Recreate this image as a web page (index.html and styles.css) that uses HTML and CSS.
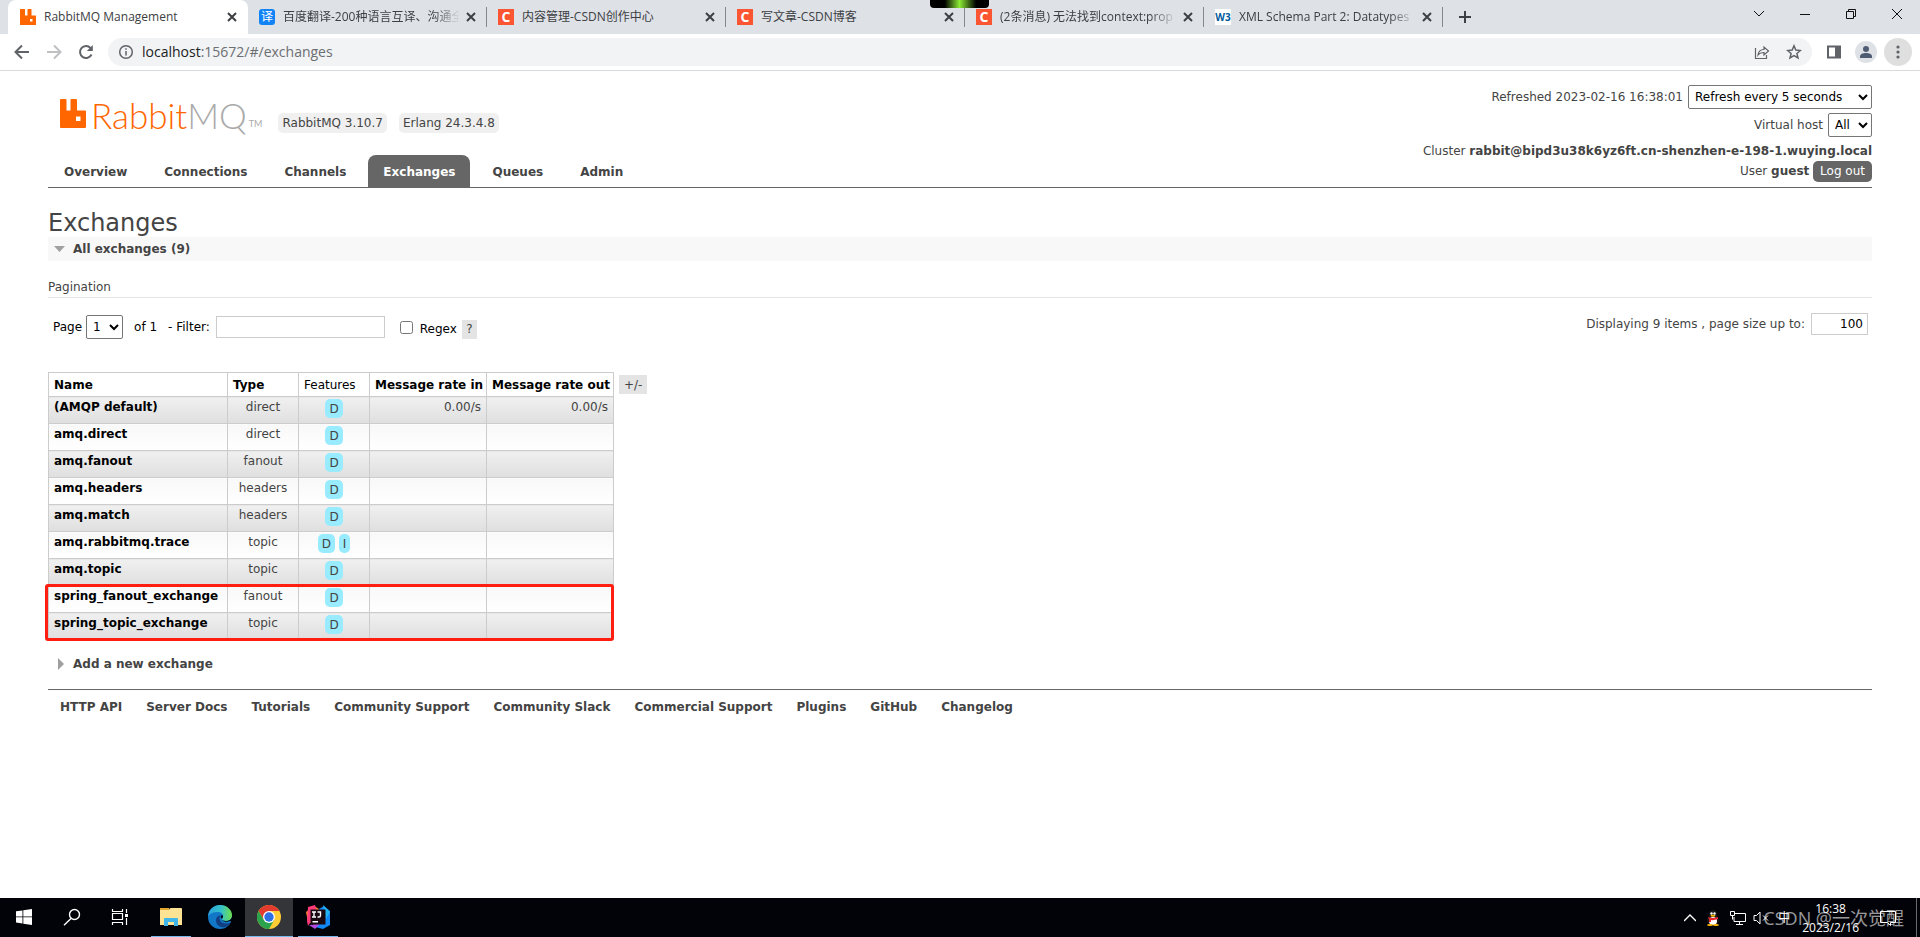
FILE: index.html
```html
<!DOCTYPE html>
<html lang="en">
<head>
<meta charset="utf-8">
<title>RabbitMQ Management</title>
<link rel="stylesheet" href="styles.css">
</head>
<body>
<header class="chrome">
  <div class="tabstrip">
    <div class="tab tab-active">
      <svg class="fav" viewBox="0 0 16 16"><path fill="#f60" d="M.5 0h4q.5 0 .5.5V6.500h2.500V.5q0-.5.5-.5h3q.5 0 .5.5V6.500h4q.5 0 .5.5v8.500q0 .5-.5.5H.5q-.5 0-.5-.5V.5Q0 0 .5 0zM10 10v2.500h2.500V10z"/></svg>
      <span class="tab-title">RabbitMQ Management</span>
      <button class="tab-x" aria-label="Close tab"><svg viewBox="0 0 10 10"><path d="M1 1l8 8M9 1L1 9"/></svg></button>
    </div>
    <div class="tab">
      <span class="fav fav-yi">译</span>
      <span class="tab-title fade">百度翻译-200种语言互译、沟通全</span>
      <button class="tab-x" aria-label="Close tab"><svg viewBox="0 0 10 10"><path d="M1 1l8 8M9 1L1 9"/></svg></button>
    </div>
    <div class="tab">
      <span class="fav fav-c">C</span>
      <span class="tab-title">内容管理-CSDN创作中心</span>
      <button class="tab-x" aria-label="Close tab"><svg viewBox="0 0 10 10"><path d="M1 1l8 8M9 1L1 9"/></svg></button>
    </div>
    <div class="tab">
      <span class="fav fav-c">C</span>
      <span class="tab-title">写文章-CSDN博客</span>
      <button class="tab-x" aria-label="Close tab"><svg viewBox="0 0 10 10"><path d="M1 1l8 8M9 1L1 9"/></svg></button>
    </div>
    <div class="tab">
      <span class="fav fav-c">C</span>
      <span class="tab-title fade">(2条消息) 无法找到context:prop</span>
      <button class="tab-x" aria-label="Close tab"><svg viewBox="0 0 10 10"><path d="M1 1l8 8M9 1L1 9"/></svg></button>
    </div>
    <div class="tab">
      <span class="fav fav-w3">W3</span>
      <span class="tab-title fade">XML Schema Part 2: Datatypes</span>
      <button class="tab-x" aria-label="Close tab"><svg viewBox="0 0 10 10"><path d="M1 1l8 8M9 1L1 9"/></svg></button>
    </div>
    <button class="newtab" aria-label="New tab"><svg viewBox="0 0 12 12"><path d="M6 0v12M0 6h12"/></svg></button>
    <div class="winctl">
      <button aria-label="Search tabs"><svg viewBox="0 0 12 12"><path d="M1 3l5 5 5-5"/></svg></button>
      <button aria-label="Minimize"><svg viewBox="0 0 12 12"><path d="M1 6.500h10"/></svg></button>
      <button aria-label="Restore"><svg viewBox="0 0 12 12"><path d="M1.500 3.500h7v7h-7zM3.500 3.500v-2h7v7h-2"/></svg></button>
      <button aria-label="Close"><svg viewBox="0 0 12 12"><path d="M1 1l10 10M11 1L1 11"/></svg></button>
    </div>
    <div class="meter"></div>
  </div>
  <div class="toolbar">
    <button class="tool" aria-label="Back"><svg viewBox="0 0 16 16"><path d="M15 8H2M8 1.500L1.500 8 8 14.500"/></svg></button>
    <button class="tool tool-off" aria-label="Forward"><svg viewBox="0 0 16 16"><path d="M1 8h13M8 1.500L14.500 8 8 14.500"/></svg></button>
    <button class="tool" aria-label="Reload"><svg viewBox="0 0 16 16"><path d="M13.500 10.500A6 6 0 1 1 12.500 4"/><path d="M14.800 1v6H8.800z" fill="#5f6368" stroke="none"/></svg></button>
    <div class="omnibox">
      <svg class="omni-icon" viewBox="0 0 16 16"><circle cx="8" cy="8" r="6.300"/><path d="M8 7v4.500M8 4.200v1.600"/></svg>
      <span class="url"><b>localhost</b>:15672/#/exchanges</span>
      <button aria-label="Share"><svg class="omni-icon" viewBox="0 0 16 16"><path d="M1.500 4v10.500h11V11M4 11c.5-4 3-5.500 6-5.500V3l4.500 4L10 11V8.500C7.500 8.500 5.500 9 4 11z" stroke-width="1.200"/></svg></button>
      <button aria-label="Bookmark"><svg class="omni-icon" viewBox="0 0 16 16"><path d="M8 1.800l1.800 4.300 4.600.4-3.500 3 1.100 4.500L8 11.600 4 14l1.100-4.500-3.500-3 4.600-.4z"/></svg></button>
    </div>
    <button class="tool" aria-label="Side panel"><svg viewBox="0 0 16 16"><path d="M2 2.500h12v11H2z"/><path d="M9 2h6v12H9z" fill="#5f6368" stroke="none"/></svg></button>
    <button class="avatar" aria-label="Profile"><svg viewBox="0 0 16 16"><circle cx="8" cy="5" r="3"/><path d="M2 14v-1.500C2 10 5 9 8 9s6 1 6 3.500V14z"/></svg></button>
    <button class="menu" aria-label="Menu"><svg viewBox="0 0 16 16"><circle cx="8" cy="3" r="1.600"/><circle cx="8" cy="8" r="1.600"/><circle cx="8" cy="13" r="1.600"/></svg></button>
  </div>
</header>

<main class="page">
  <div class="top">
    <div class="brand">
      <svg class="mark" viewBox="0 0 26 29"><path fill="#f60" d="M1 0h4.500q1 0 1 1v10.500h4V1q0-1 1-1H16q1 0 1 1v10.500h8q1 0 1 1V28q0 1-1 1H1q-1 0-1-1V1Q0 0 1 0zM16 17.500v4.500h4.500v-4.500z"/></svg>
      <span class="word"><span class="rabbit">Rabbit</span>MQ</span><span class="tm">TM</span>
      <span class="pill">RabbitMQ 3.10.7</span>
      <span class="pill">Erlang 24.3.4.8</span>
    </div>
    <div class="status">
      <div class="status-row"><label for="refresh">Refreshed 2023-02-16 16:38:01</label><select id="refresh" class="sel-refresh"><option>Refresh every 5 seconds</option></select></div>
      <div class="status-row"><label for="vhost">Virtual host</label><select id="vhost" class="sel-vhost"><option>All</option></select></div>
      <div class="status-text">Cluster <b>rabbit@bipd3u38k6yz6ft.cn-shenzhen-e-198-1.wuying.local</b></div>
      <div class="status-text">User <b>guest</b> <button class="logout">Log out</button></div>
    </div>
  </div>
  <nav class="nav">
    <a href="#/">Overview</a><a href="#/connections">Connections</a><a href="#/channels">Channels</a><a href="#/exchanges" class="selected">Exchanges</a><a href="#/queues">Queues</a><a href="#/users">Admin</a>
  </nav>

  <h1>Exchanges</h1>
  <h2 class="section section-open"><svg viewBox="0 0 12 12"><path d="M0 3h11L5.500 9z"/></svg>All exchanges (9)</h2>

  <h3>Pagination</h3>
  <div class="filters">
    <label for="page">Page</label>
    <select id="page" class="sel-page"><option>1</option></select>
    <span class="of">of 1</span>
    <label for="filter" class="filter-label">- Filter:</label>
    <input id="filter" class="filter" type="text">
    <input id="regex" class="check" type="checkbox">
    <div class="regex"><label for="regex">Regex</label><button class="help">?</button></div>
    <div class="paging"><label for="size">Displaying 9 items , page size up to:</label><input id="size" class="size" type="text" value="100"></div>
  </div>

  <div class="listing">
    <div class="table-wrap">
      <table>
        <thead><tr><th class="c-name">Name</th><th class="c-type">Type</th><th class="c-feat">Features</th><th class="c-in">Message rate in</th><th class="c-out">Message rate out</th></tr></thead>
        <tbody>
          <tr><td><a href="#">(AMQP default)</a></td><td>direct</td><td><abbr>D</abbr></td><td>0.00/s</td><td>0.00/s</td></tr>
          <tr><td><a href="#">amq.direct</a></td><td>direct</td><td><abbr>D</abbr></td><td></td><td></td></tr>
          <tr><td><a href="#">amq.fanout</a></td><td>fanout</td><td><abbr>D</abbr></td><td></td><td></td></tr>
          <tr><td><a href="#">amq.headers</a></td><td>headers</td><td><abbr>D</abbr></td><td></td><td></td></tr>
          <tr><td><a href="#">amq.match</a></td><td>headers</td><td><abbr>D</abbr></td><td></td><td></td></tr>
          <tr><td><a href="#">amq.rabbitmq.trace</a></td><td>topic</td><td><abbr>D</abbr> <abbr>I</abbr></td><td></td><td></td></tr>
          <tr><td><a href="#">amq.topic</a></td><td>topic</td><td><abbr>D</abbr></td><td></td><td></td></tr>
          <tr><td><a href="#">spring_fanout_exchange</a></td><td>fanout</td><td><abbr>D</abbr></td><td></td><td></td></tr>
          <tr><td><a href="#">spring_topic_exchange</a></td><td>topic</td><td><abbr>D</abbr></td><td></td><td></td></tr>
        </tbody>
      </table>
      <div class="highlight"></div>
    </div>
    <button class="columns">+/-</button>
  </div>

  <h2 class="section"><svg viewBox="0 0 12 12"><path d="M4 0l6 6-6 6z"/></svg>Add a new exchange</h2>

  <footer class="foot">
    <a href="#">HTTP API</a><a href="#">Server Docs</a><a href="#">Tutorials</a><a href="#">Community Support</a><a href="#">Community Slack</a><a href="#">Commercial Support</a><a href="#">Plugins</a><a href="#">GitHub</a><a href="#">Changelog</a>
  </footer>
</main>

<div class="taskbar">
  <button class="task" aria-label="Start"><svg width="16" height="16" viewBox="0 0 16 16"><path fill="#fff" d="M0 2.300L6.500 1.400v6.100H0zM7.300 1.300L16 0v7.500H7.300zM0 8.300h6.500v6.200L0 13.600zM7.300 8.300H16V16l-8.700-1.200z"/></svg></button>
  <button class="task" aria-label="Search"><svg width="18" height="18" viewBox="0 0 18 18" fill="none" stroke="#fff" stroke-width="1.400"><circle cx="11.500" cy="6.500" r="5"/><path d="M8 10.500L1 17.300"/></svg></button>
  <button class="task" aria-label="Task view"><svg width="18" height="18" viewBox="0 0 18 18" fill="none" stroke="#fff" stroke-width="1.200"><path d="M1.500 1v2.500h10V1M1.500 5.500h10v6h-10zM1.500 17v-2.500h10V17M15.500 1v4M15.500 10v7"/><path d="M14 6h3v3h-3z" fill="#fff" stroke="none"/></svg></button>
  <button class="task task-wide open" aria-label="File Explorer"><svg width="24" height="24" viewBox="0 0 24 24"><path fill="#e3a832" d="M1 3h9l1 2H1z"/><path fill="#ffe394" d="M1 5h9l1.500-2H22q1 0 1 1v16H1z"/><path fill="#41b5e8" d="M5 21v-7q0-1 1-1h12q1 0 1 1v7h-4v-4H9v4z"/></svg></button>
  <button class="task" aria-label="Edge"><svg width="24" height="24" viewBox="0 0 24 24"><defs><linearGradient id="e1" x1="0" x2="1"><stop stop-color="#2aa3e0"/><stop offset=".55" stop-color="#35c1c8"/><stop offset="1" stop-color="#6fe04a"/></linearGradient></defs><circle cx="12" cy="12" r="12" fill="#1178c8"/><path fill="url(#e1)" d="M0 11C1 4 6 0 12 0c7 0 12 5 12 10 0 4-3 6-6 6-3 0-4-1-4-2 0-.8 1-1.200 1-3 0-2.500-2.500-4-5.500-4C5 7 1.500 9 0 11z"/><path fill="#123f82" d="M8 15c0 5 4 8 9 7 3-.8 5-3 5.500-4.500-3 1.500-8 1.500-10-1.500-1.500-2-1-4 0-5.500-2.500 0-4.500 2-4.500 4.500z"/><path fill="#020308" d="M14 14c0 2.500 3.500 3.500 8.500 2l1.500 2V12c-1 3-3.500 4-6 4-3 0-4-1-4-2z"/><path fill="#020308" d="M13 10.500q2-1 2 .8 0 1-1 2.500-2-1-1-3.300z"/></svg></button>
  <button class="task open current" aria-label="Chrome"><svg width="24" height="24" viewBox="0 0 24 24"><circle cx="12" cy="12" r="12" fill="#fc3"/><path fill="#e33b2e" d="M1.600 6A12 12 0 0 1 22.400 6H12L6.800 15z"/><path fill="#2ba24c" d="M1.600 6A12 12 0 0 0 12 24l5.200-9H6.800z"/><circle cx="12" cy="12" r="6" fill="#fff"/><circle cx="12" cy="12" r="4.700" fill="#2f6fe4"/></svg></button>
  <button class="task task-wide open" aria-label="IntelliJ IDEA"><svg width="24" height="24" viewBox="0 0 24 24"><path fill="#fd8b2c" d="M0 7l8-6 5 3-4 16-7-3z"/><path fill="#fc3a78" d="M2 2l7-2 2 7-9 14-1-5z"/><path fill="#1387f4" d="M13 4l5-3 6 5v14l-7 4-8-2z"/><path fill="#22b5f0" d="M17 0l7 7-4 7z"/><path fill="#b64be0" d="M3 20l6 4 5-5z"/><path fill="#190a12" d="M4.500 4.500h15v15h-15z"/><path d="M6 7h4M8 7v5M6 12h4M11.500 7h3v3.500q0 1.500-1.500 1.500h-1.500" fill="none" stroke="#fff" stroke-width="1.400"/><path fill="#fff" d="M6.500 16H12v1.500H6.500z"/></svg></button>
  <div class="tray">
    <svg class="i-up" viewBox="0 0 12 12" fill="none" stroke="#fff" stroke-width="1.400"><path d="M0 9l6-6 6 6"/></svg>
    <svg class="i-qq" viewBox="0 0 16 16"><ellipse cx="8" cy="10" rx="6" ry="5" fill="#181818"/><ellipse cx="8" cy="4.500" rx="4" ry="4.500" fill="#181818"/><ellipse cx="8" cy="11" rx="4" ry="4" fill="#fff"/><circle cx="6.500" cy="3.500" r="1.200" fill="#fff"/><circle cx="9.500" cy="3.500" r="1.200" fill="#fff"/><ellipse cx="8" cy="5.700" rx="2.500" ry="1" fill="#fb0"/><path fill="#e8262c" d="M3 7q5 2 10 0v2q-4 1.500-7 1v2H4V9.500z"/><ellipse cx="5" cy="15" rx="3" ry="1" fill="#fb0"/><ellipse cx="11" cy="15" rx="3" ry="1" fill="#fb0"/></svg>
    <svg class="i-net" viewBox="0 0 16 16" fill="none" stroke="#fff"><path d="M5 3.500h10.500v8H4V7M9.500 11.500v3M6 14.500h7M.5 1.500h4v4h-4zM2.500 5.500v4"/></svg>
    <svg class="i-snd" viewBox="0 0 16 16" fill="none" stroke="#fff"><path d="M1 5.500h2.500L7 2v12l-3.500-3.500H1zM10 5.500l5 5M15 5.500l-5 5"/></svg>
    <span class="ime">中</span>
    <div class="clock"><span>16:38</span><span>2023/2/16</span></div>
    <svg class="i-note" viewBox="0 0 16 16" fill="none" stroke="#fff"><path d="M.5 1.500h15v11h-5v3l-3-3h-7z"/></svg>
    <span class="desk"></span>
  </div>
  <span class="watermark">CSDN @一次觉醒</span>
</div>
</body>
</html>
```

FILE: styles.css
```css
* { box-sizing: border-box; }
body {
  margin: 0;
  min-height: 100vh;
  display: flex;
  flex-direction: column;
  background: #fff;
  color: #444;
  font: 12px/16px "DejaVu Sans", Verdana, sans-serif;
}
button { border: 0; background: none; padding: 0; font: inherit; color: inherit; }
a { color: #444; text-decoration: none; font-weight: bold; }
svg { display: block; flex: none; }

/* Browser window */
.chrome { font-family: "Open Sans", "Noto Sans CJK SC", sans-serif; }
.tabstrip {
  position: relative;
  display: flex;
  align-items: center;
  height: 34px;
  padding-left: 8px;
  background: #dee1e6;
}
.tab {
  display: flex;
  align-items: center;
  width: 239px;
  height: 20px;
  padding: 0 8px 0 11px;
  border-right: 1px solid #85888d;
}
.tab-active {
  width: 240px;
  height: 34px;
  padding: 0 9px 0 12px;
  border: 0;
  border-radius: 8px 8px 0 0;
  background: #fff;
}
.fav { width: 16px; height: 16px; flex: none; line-height: 16px; text-align: center; }
.fav-yi { border-radius: 3px; background: #1283f5; color: #fff; font-size: 12px; }
.fav-c { background: #fc5531; color: #fff; font-size: 14px; font-weight: bold; }
.fav-w3 { background: #fff; color: #005a9c; font-size: 10px; font-weight: bold; }
.tab-title {
  flex: 1;
  margin: 0 4px 0 8px;
  overflow: hidden;
  white-space: nowrap;
  color: #3c4043;
}
.fade { -webkit-mask-image: linear-gradient(90deg, #000 85%, transparent); mask-image: linear-gradient(90deg, #000 85%, transparent); }
.tab-x { width: 14px; height: 14px; padding: 2px; }
.tab-x svg, .newtab svg, .winctl svg { width: 100%; height: 100%; fill: none; stroke: #3c4043; stroke-width: 2; }
.newtab { width: 12px; height: 12px; margin-left: 16px; }
.winctl { display: flex; margin-left: auto; margin-bottom: 6px; }
.winctl button { width: 46px; height: 12px; padding: 0 17px; }
.winctl svg { stroke: #111; stroke-width: 1; }
.meter {
  position: absolute;
  top: 0;
  left: 930px;
  width: 59px;
  height: 8px;
  border-radius: 0 0 4px 4px;
  background: linear-gradient(90deg, #000 25%, #8bea35 50%, #000 78%);
}
.toolbar {
  display: flex;
  align-items: center;
  height: 37px;
  padding: 0 8px 1px 6px;
  border-bottom: 1px solid #d9dadc;
}
.tool { width: 32px; height: 28px; padding: 6px 8px; }
.tool svg, .omni-icon { width: 16px; height: 16px; fill: none; stroke: #5f6368; stroke-width: 2; }
.tool-off { opacity: 0.4; }
.omnibox {
  flex: 1;
  display: flex;
  align-items: center;
  gap: 16px;
  height: 28px;
  margin: 0 6px;
  padding: 0 10px;
  border-radius: 14px;
  background: #f1f3f4;
}
.omni-icon { stroke-width: 1.5; }
.url { flex: 1; margin-left: -8px; font-size: 14px; color: #6b6e72; }
.url b { font-weight: normal; color: #202124; }
.avatar { width: 22px; height: 22px; padding: 3px; border-radius: 50%; background: #dee1e6; margin-left: 5px; }
.avatar svg { width: 16px; height: 16px; fill: #4f5b73; }
.menu { width: 28px; height: 28px; padding: 6px; border-radius: 50%; background: #dfdfdf; margin-left: 7px; }
.menu svg { width: 16px; height: 16px; fill: #5f6368; }

/* Management page */
.page { flex: 1; padding: 14px 48px 0; }
.top { display: flex; justify-content: space-between; height: 70px; }
.brand { display: flex; align-items: flex-start; padding: 14px 0 0 12px; }
.mark { width: 26px; height: 29px; }
.word { margin-left: 5px; font: 300 35px/32px Lato, "Liberation Sans", sans-serif; color: #aaa; }
.rabbit { color: #f60; }
.tm { margin: 19px 16px 0 2px; font: 9px/12px Lato, sans-serif; color: #aaa; }
.pill { margin: 14px 12px 0 0; padding: 2px 4px; border-radius: 5px; background: #f0f0f0; }
.status { display: flex; flex-direction: column; align-items: flex-end; }
.status-row { display: flex; align-items: center; gap: 5px; margin-bottom: 4px; }
.status-text { height: 22px; line-height: 20px; white-space: nowrap; }
.logout { height: 21px; padding: 0 7px; border-radius: 5px; background: #666; color: #fff; line-height: 21px; }
select {
  height: 24px;
  padding: 0 2px;
  border: 1px solid #767676;
  border-radius: 2px;
  background: #fff;
  color: #000;
  font: inherit;
}
.sel-refresh { width: 184px; }
.sel-vhost { width: 44px; }
.sel-page { width: 37px; }
.nav { display: flex; padding-left: 1px; border-bottom: 1px solid #666; }
.nav a { padding: 9px 15px 7px; margin-right: 7px; border-radius: 8px 8px 0 0; }
.nav .selected { background: #666; color: #fff; }
h1 { margin: 21px 0 0; font-size: 24px; line-height: 28px; font-weight: normal; }
.section { display: flex; align-items: center; gap: 7px; margin: 0; padding: 4px 6px; font-size: 12px; line-height: 16px; }
.section-open { background: #f8f8f8; }
.section svg { width: 12px; height: 12px; fill: #a0a0a0; }
h3 { margin: 18px 0 0; padding-bottom: 2px; border-bottom: 1px solid #e4e4e4; font-size: 12px; font-weight: normal; }
.filters { display: flex; align-items: center; height: 24px; margin: 17px 4px 0 5px; color: #000; }
.sel-page { margin: 0 11px 0 4px; }
.filter-label { margin: 0 6px 0 11px; }
.filter, .size { height: 22px; border: 1px solid #ccc; font: inherit; }
.filter { width: 169px; }
.check { width: 13px; height: 13px; margin: 0 7px 0 15px; }
.help, .columns { background: #e4e4e4; color: #444; }
.help { width: 15px; height: 19px; margin-left: 5px; }
.regex { display: flex; align-items: center; padding-top: 4px; }
.paging { display: flex; align-items: center; gap: 6px; margin-left: auto; padding-bottom: 6px; color: #444; }
.size { width: 57px; text-align: right; padding: 1px 4px; }
.listing { display: flex; align-items: flex-start; margin: 33px 0 12px; }
.table-wrap { position: relative; }
table { border-collapse: collapse; table-layout: fixed; width: 566px; }
th, td { border: 1px solid #ccc; padding: 0 5px; text-align: center; white-space: nowrap; }
th { height: 24px; color: #000; }
td { height: 27px; padding: 2px 5px 0; vertical-align: top; }
th:first-child, td:first-child { text-align: left; }
td:nth-child(n+4), th:nth-child(n+4) { text-align: right; }
th.c-type { text-align: left; }
th.c-feat { text-align: left; font-weight: normal; }
.c-name { width: 179px; }
.c-type, .c-feat { width: 71px; }
.c-in { width: 117px; }
.c-out { width: 127px; }
td a { color: #000; }
tbody tr:nth-child(odd) td { background: linear-gradient(#f0f0f0, #dfdfdf); }
tbody tr:nth-child(even) td { background: linear-gradient(#f8f8f8, #fff); }
abbr { display: inline-block; padding: 2px 4px 1px; border-radius: 5px; background: #99ebff; }
.highlight {
  position: absolute;
  left: -3px;
  right: 0;
  bottom: -1px;
  height: 57px;
  border: 3px solid #ff1e10;
  border-radius: 3px;
}
.columns { height: 19px; margin: 3px 0 0 5px; padding: 0 5px; }
.foot { display: flex; gap: 24px; margin-top: 13px; padding: 9px 12px; border-top: 1px solid #666; }

/* Desktop taskbar */
.taskbar { position: relative; display: flex; height: 39px; background: #020308; color: #fff; font-family: "Open Sans", "Noto Sans CJK SC", sans-serif; }
.task { display: flex; align-items: center; justify-content: center; width: 48px; border-bottom: 1px solid transparent; }
.task-wide { width: 40px; margin: 0 5px 0 7px; }
.open { border-color: #76b9ed; }
.current { background: #343539; margin-left: 1px; }
.task-wide + .task { margin-left: 0; }
.current + .task-wide { margin-left: 5px; }
.tray { display: flex; align-items: center; margin-left: auto; }
.tray svg { width: 16px; height: 16px; }
.tray .i-up { width: 12px; height: 12px; margin-right: 9px; }
.i-qq { margin-right: 9px; }
.i-net { margin-right: 7px; }
.i-snd { margin-right: 9px; }
.ime { margin-right: 12px; }
.clock { display: flex; flex-direction: column; align-items: center; line-height: 19px; margin-right: 21px; }
.desk { width: 4px; height: 39px; margin-left: 20px; border-left: 1px solid #6a6b6d; }
.watermark { position: absolute; right: 16px; top: 8px; font-size: 18px; line-height: 24px; color: rgba(255, 255, 255, 0.6); }
```
